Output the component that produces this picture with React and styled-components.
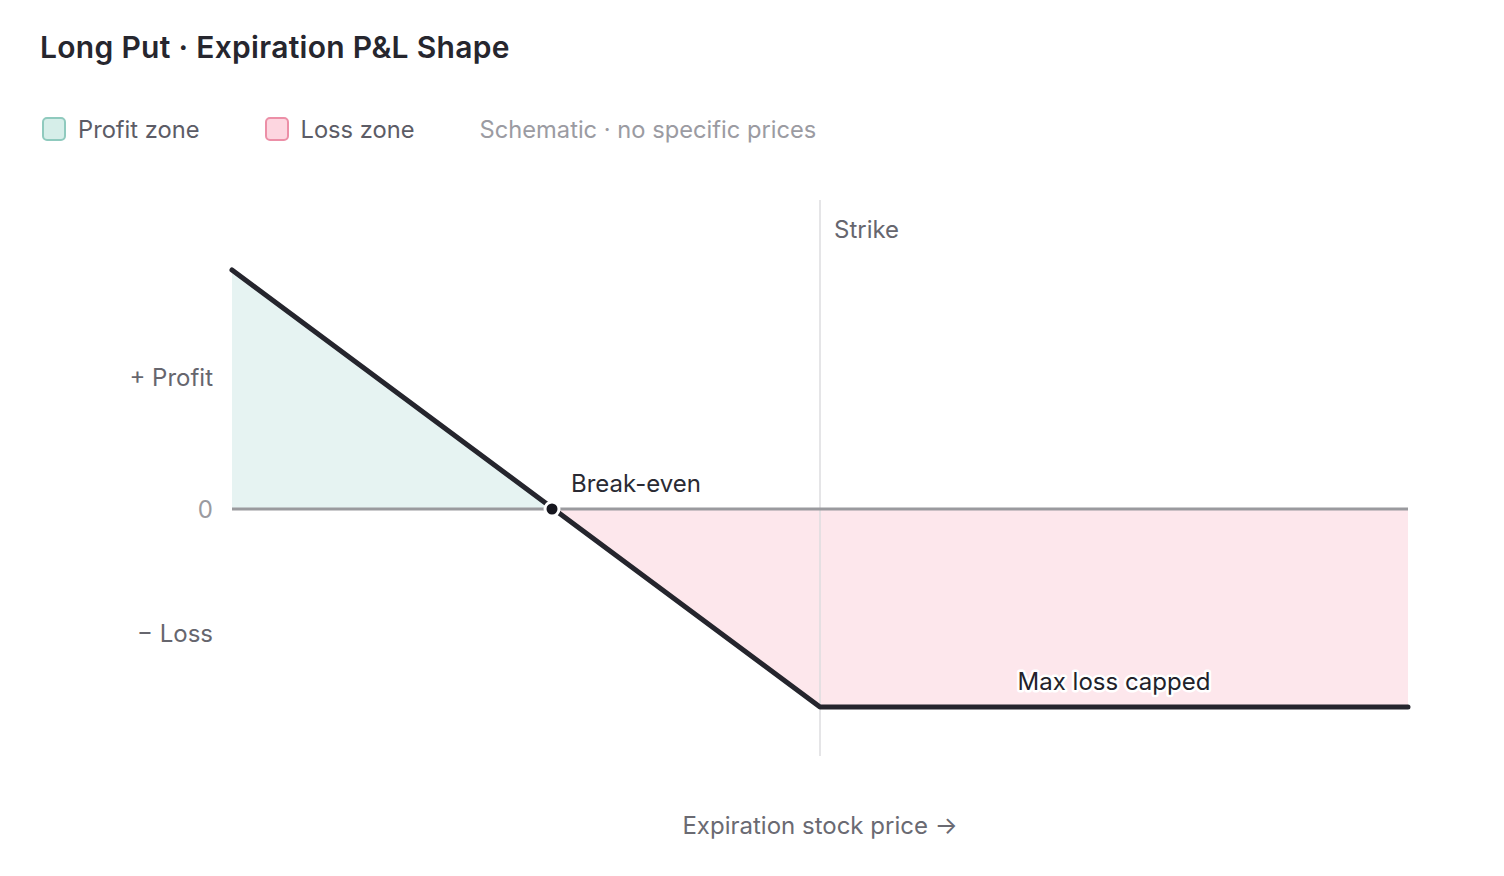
import React from 'react';
import styled, { createGlobalStyle } from 'styled-components';

const GlobalStyle = createGlobalStyle`
  html, body {
    margin: 0;
    padding: 0;
    background: #ffffff;
  }
  body {
    font-family: Inter, 'Noto Sans', sans-serif;
    -webkit-font-smoothing: antialiased;
  }
`;

const Page = styled.div`
  width: 1504px;
  height: 876px;
  box-sizing: border-box;
  padding: 29px 0 0 40px;
  overflow: hidden;
`;

const Title = styled.h1`
  margin: 0;
  font-size: 30px;
  line-height: 36px;
  font-weight: 600;
  letter-spacing: 0.3px;
  color: #26262e;
`;

const Legend = styled.div`
  display: flex;
  align-items: center;
  gap: 65px;
  margin-top: 52px;
  padding-left: 2px;
  height: 24px;
`;

const LegendItem = styled.div`
  display: flex;
  align-items: center;
  gap: 12px;
  font-size: 23.7px;
  color: #5c5c66;
`;

const Swatch = styled.span`
  width: 24px;
  height: 24px;
  box-sizing: border-box;
  border-radius: 5px;
  background: ${(p) => p.$fill};
  border: 2px solid ${(p) => p.$border};
`;

const Note = styled.span`
  font-size: 23.7px;
  color: #9b9ba2;
`;

const Chart = styled.svg`
  display: block;
  margin-top: 39px;
  font-family: Inter, 'Noto Sans', sans-serif;
`;

// chart uses page coordinates through the viewBox
const L = 232;
const R = 1408;
const ZERO = 509;
const TOP = 270;
const BE = 552;
const STRIKE = 820;
const FLOOR = 707;

export default function App() {
  return (
    <>
      <GlobalStyle />
      <Page>
        <Title>Long Put · Expiration P&amp;L Shape</Title>
        <Legend>
          <LegendItem>
            <Swatch $fill="#d6eee9" $border="#8fcabe" />
            Profit zone
          </LegendItem>
          <LegendItem>
            <Swatch $fill="#fdd6e0" $border="#ec8fa7" />
            Loss zone
          </LegendItem>
          <Note>Schematic · no specific prices</Note>
        </Legend>
        <Chart width="1464" height="696" viewBox="40 180 1464 696">
          <polygon points={`${L},${TOP} ${BE},${ZERO} ${L},${ZERO}`} fill="#e6f3f2" />
          <polygon
            points={`${BE},${ZERO} ${STRIKE},${FLOOR} ${R},${FLOOR} ${R},${ZERO}`}
            fill="#fde7ec"
          />
          <line x1={STRIKE} y1="200" x2={STRIKE} y2="756" stroke="#dcdcdf" strokeWidth="1.5" />
          <line x1={L} y1={ZERO} x2={R} y2={ZERO} stroke="#9a9a9e" strokeWidth="3" />
          <polyline
            points={`${L},${TOP} ${STRIKE},${FLOOR} ${R},${FLOOR}`}
            fill="none"
            stroke="#25252d"
            strokeWidth="5"
            strokeLinecap="round"
            strokeLinejoin="round"
          />
          <circle cx={BE} cy={ZERO} r="7" fill="#16161e" stroke="#ffffff" strokeWidth="3" />

          <text x="834" y="238" fontSize="24" fill="#66666e">Strike</text>
          <text x="571" y="492" fontSize="24" fill="#2a2a33">Break-even</text>
          <text
            x="1114"
            y="690"
            fontSize="24"
            fill="#22222a"
            textAnchor="middle"
            stroke="#ffffff"
            strokeWidth="5"
            strokeLinejoin="round"
            paintOrder="stroke"
          >
            Max loss capped
          </text>

          <text x="213" y="386" fontSize="24" fill="#66666e" textAnchor="end">+ Profit</text>
          <text x="213" y="518" fontSize="24" fill="#9a9aa0" textAnchor="end">0</text>
          <text x="213" y="642" fontSize="24" fill="#66666e" textAnchor="end">− Loss</text>

          <text x="820" y="834" fontSize="24" fill="#6a6a72" textAnchor="middle">
            Expiration stock price →
          </text>
        </Chart>
      </Page>
    </>
  );
}
